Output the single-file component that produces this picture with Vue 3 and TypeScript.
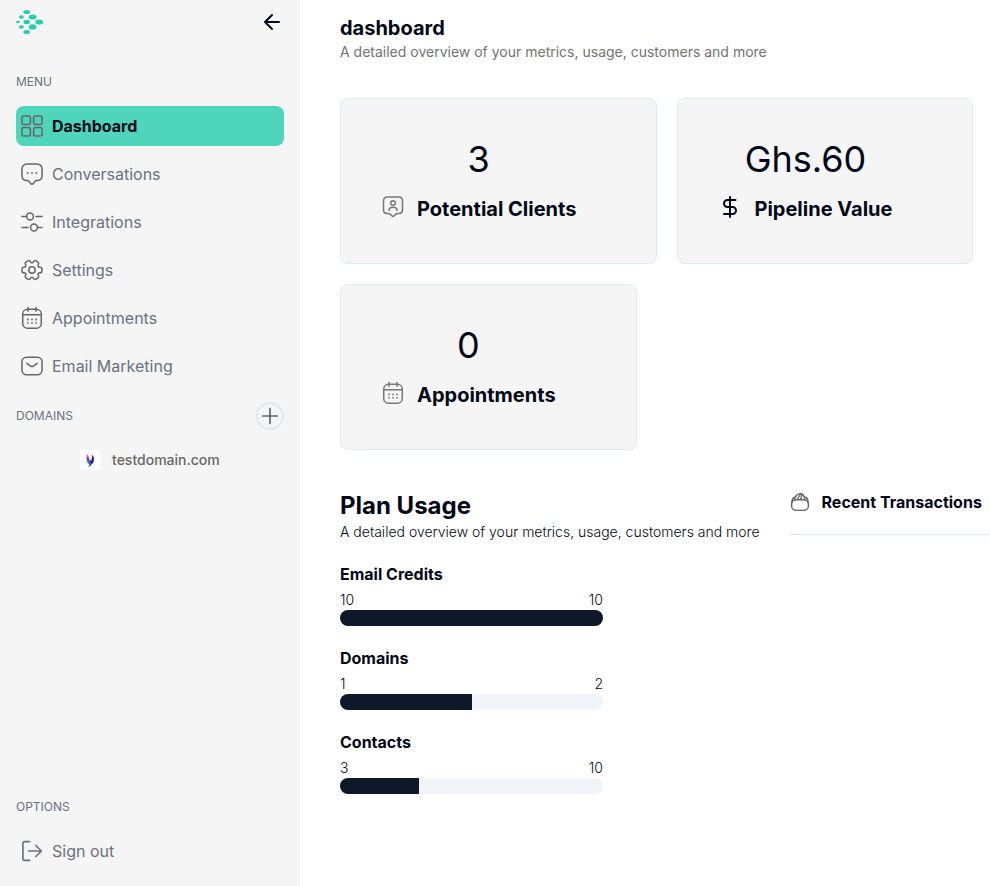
<script setup lang="ts">
interface NavItem {
  label: string
  icon: 'grid' | 'chat' | 'sliders' | 'gear' | 'calendar' | 'mail'
  active?: boolean
}

interface Stat {
  label: string
  value: string
  icon: 'contact' | 'dollar' | 'calendar'
}

interface Usage {
  label: string
  used: number
  limit: number
}

const navItems: NavItem[] = [
  { label: 'Dashboard', icon: 'grid', active: true },
  { label: 'Conversations', icon: 'chat' },
  { label: 'Integrations', icon: 'sliders' },
  { label: 'Settings', icon: 'gear' },
  { label: 'Appointments', icon: 'calendar' },
  { label: 'Email Marketing', icon: 'mail' },
]

const stats: Stat[] = [
  { label: 'Potential Clients', value: '3', icon: 'contact' },
  { label: 'Pipeline Value', value: 'Ghs.60', icon: 'dollar' },
  { label: 'Appointments', value: '0', icon: 'calendar' },
]

const usage: Usage[] = [
  { label: 'Email Credits', used: 10, limit: 10 },
  { label: 'Domains', used: 1, limit: 2 },
  { label: 'Contacts', used: 3, limit: 10 },
]

const percent = (u: Usage): string => `${(u.used / u.limit) * 100}%`
</script>

<template>
  <div class="layout">
    <aside class="sidebar">
      <div class="brand">
        <svg class="logo" viewBox="0 0 28 26" aria-hidden="true">
          <ellipse cx="10.7" cy="3" rx="3.3" ry="2.1" />
          <ellipse cx="5.4" cy="8" rx="2.5" ry="1.8" />
          <ellipse cx="16.6" cy="8" rx="3.9" ry="2.6" />
          <ellipse cx="1.9" cy="13" rx="1.9" ry="1.2" />
          <ellipse cx="10.7" cy="13" rx="3.2" ry="2.2" />
          <ellipse cx="23.2" cy="13" rx="3.9" ry="2.6" />
          <ellipse cx="5.4" cy="18" rx="2.5" ry="1.8" />
          <ellipse cx="16.6" cy="17.9" rx="3.9" ry="2.6" />
          <ellipse cx="10.7" cy="23" rx="3.3" ry="2.1" />
        </svg>
        <button class="collapse" type="button" aria-label="Collapse sidebar">
          <svg class="icon" viewBox="0 0 24 24" aria-hidden="true">
            <path d="M12 19l-7-7 7-7M19 12H5" />
          </svg>
        </button>
      </div>

      <p class="caption menu-caption">MENU</p>
      <nav class="nav">
        <a
          v-for="item in navItems"
          :key="item.label"
          href="#"
          class="nav-link"
          :class="{ active: item.active }"
        >
          <svg class="icon thin" viewBox="0 0 24 24" aria-hidden="true">
            <template v-if="item.icon === 'grid'">
              <rect x="1.900" y="1.900" width="8.500" height="8.500" rx="2" />
              <rect x="13.600" y="1.900" width="8.500" height="8.500" rx="2" />
              <rect x="1.900" y="13.600" width="8.500" height="8.500" rx="2" />
              <rect x="13.600" y="13.600" width="8.500" height="8.500" rx="2" />
            </template>
            <template v-else-if="item.icon === 'chat'">
              <path d="M7.500 2h9c3.900 0 5.600 1.900 5.600 5.600v5.400c0 3.700-1.800 5.600-5.100 5.600-1 0-1.700.3-2.300 1.100l-1.400 1.900c-.8.900-1.800.9-2.600 0l-1.400-1.900c-.6-.8-1.300-1.100-2.300-1.100-3.300 0-5.100-1.900-5.100-5.600V7.600C1.900 3.900 3.600 2 7.500 2z" />
              <path class="dots" d="M7.800 11h.01M12 11h.01M16.200 11h.01" />
            </template>
            <template v-else-if="item.icon === 'sliders'">
              <circle cx="10" cy="6.500" r="3.400" />
              <circle cx="14" cy="17.500" r="3.400" />
              <path d="M2 6.500h4.500M16 6.500h6M2 17.500h6M17.600 17.500H22" />
            </template>
            <template v-else-if="item.icon === 'gear'">
              <circle cx="12" cy="12" r="3.200" />
              <path d="M2 12.900v-1.800c0-1 .9-1.900 1.900-1.900 1.800 0 2.500-1.300 1.600-2.900-.5-.9-.2-2 .7-2.500l1.700-1c.8-.5 1.800-.2 2.300.6l.1.200c.9 1.600 2.400 1.600 3.300 0l.1-.2c.5-.8 1.500-1.100 2.300-.6l1.700 1c.9.5 1.200 1.700.7 2.500-.9 1.600-.2 2.900 1.600 2.900 1 0 1.900.9 1.900 1.900v1.800c0 1-.9 1.900-1.900 1.900-1.800 0-2.500 1.300-1.600 2.900.5.900.2 2-.7 2.500l-1.700 1c-.8.500-1.800.2-2.300-.6l-.1-.2c-.9-1.600-2.400-1.600-3.300 0l-.1.200c-.5.800-1.500 1.100-2.300.6l-1.700-1c-.9-.5-1.200-1.600-.7-2.500.9-1.600.2-2.900-1.600-2.900-1 0-1.900-.8-1.900-1.900z" />
            </template>
            <template v-else-if="item.icon === 'calendar'">
              <path d="M8 1.500v3.700M16 1.500v3.700M3 8.800h18" />
              <rect x="2.700" y="3.300" width="18.600" height="18.900" rx="4.800" />
              <path class="dots" d="M8 13.500h.01M12 13.500h.01M16 13.500h.01M8 16.800h.01M12 16.800h.01M16 16.800h.01" />
            </template>
            <template v-else>
              <rect x="1.900" y="3.200" width="20.200" height="17.600" rx="4.800" />
              <path d="M7 9.300l3.200 2.500c1 .8 2.600.8 3.600 0L17 9.300" />
            </template>
          </svg>
          <span>{{ item.label }}</span>
        </a>
      </nav>

      <div class="domains-head">
        <p class="caption">DOMAINS</p>
        <button class="add" type="button" aria-label="Add domain">
          <svg class="icon medium" viewBox="0 0 24 24" aria-hidden="true">
            <path d="M12 4.700v14.600M4.700 12h14.600" />
          </svg>
        </button>
      </div>
      <a class="domain" href="#">
        <svg class="favicon" viewBox="0 0 20 20" aria-hidden="true">
          <rect width="20" height="20" fill="#fff" />
          <path d="M6.500 3l2 3.200.7 3.300-2-2.200z" fill="#d9589f" />
          <path d="M6 6.500l3 2 1.300 3.500L7 9.800z" fill="#7a2496" />
          <path d="M12.500 4.500L14 8l-.3 3.500-1.700 3-3-2.500 1.500-2 .8 1z" fill="#2a12a8" />
          <path d="M6.300 9.800l4 1.500.8 3.200-3-.9z" fill="#23808c" />
          <path d="M9 13l3 .2-1.200 2.600L8 17l1.300-2z" fill="#1a5fb8" />
        </svg>
        <span>testdomain.com</span>
      </a>

      <div class="options">
        <p class="caption">OPTIONS</p>
        <button class="sign-out" type="button">
          <svg class="icon medium" viewBox="0 0 24 24" aria-hidden="true">
            <path d="M9.500 2.600H4.600a1.700 1.700 0 0 0-1.700 1.700v15.400a1.700 1.700 0 0 0 1.700 1.700h4.900M8.600 12h12.400M15.800 6.500l5.500 5.500-5.500 5.500" />
          </svg>
          <span>Sign out</span>
        </button>
      </div>
    </aside>

    <main class="main">
      <header>
        <h1 class="title">dashboard</h1>
        <p class="subtitle">A detailed overview of your metrics, usage, customers and more</p>
      </header>

      <section class="stats" aria-label="Metrics">
        <article v-for="stat in stats" :key="stat.label" class="card">
          <p class="value">{{ stat.value }}</p>
          <div class="card-label">
            <svg
              class="icon"
              :class="stat.icon === 'dollar' ? 'dollar' : 'thin pale'"
              viewBox="0 0 24 24"
              aria-hidden="true"
            >
              <template v-if="stat.icon === 'contact'">
                <path d="M6.500 2h11c2.700 0 4 1.400 4 3.800v9c0 2.400-1.300 3.800-4 3.800h-.8c-.8 0-1.500.3-2.100.8l-1.500 1.500c-.7.7-1.500.7-2.200 0l-1.500-1.500c-.6-.5-1.300-.8-2.100-.8h-.8c-2.700 0-4-1.400-4-3.800v-9C2.500 3.400 3.800 2 6.500 2z" />
                <circle cx="12" cy="8" r="2.300" />
                <path d="M8 15.400c0-1.900 1.800-3.200 4-3.200s4 1.300 4 3.200" />
              </template>
              <template v-else-if="stat.icon === 'dollar'">
                <path d="M12 2v20M17.500 5H9.500a3.500 3.500 0 0 0 0 7h5a3.500 3.500 0 0 1 0 7H6" />
              </template>
              <template v-else>
                <path d="M8 1.500v3.700M16 1.500v3.700M3 8.800h18" />
                <rect x="2.700" y="3.300" width="18.600" height="18.900" rx="4.800" />
                <path class="dots" d="M8 13.500h.01M12 13.500h.01M16 13.500h.01M8 16.800h.01M12 16.800h.01M16 16.800h.01" />
              </template>
            </svg>
            <h2 class="card-title">{{ stat.label }}</h2>
          </div>
        </article>
      </section>

      <div class="lower">
        <section class="plan">
          <h2 class="plan-title">Plan Usage</h2>
          <p class="plan-text">A detailed overview of your metrics, usage, customers and more</p>
          <div v-for="u in usage" :key="u.label" class="usage">
            <h3 class="section-label">{{ u.label }}</h3>
            <div class="counts">
              <span>{{ u.used }}</span>
              <span>{{ u.limit }}</span>
            </div>
            <div
              class="track"
              role="progressbar"
              :aria-label="u.label"
              :aria-valuenow="u.used"
              aria-valuemin="0"
              :aria-valuemax="u.limit"
            >
              <div class="fill" :style="{ width: percent(u) }"></div>
            </div>
          </div>
        </section>

        <section class="recent">
          <svg class="icon small" viewBox="0 0 24 24" aria-hidden="true">
            <rect x="1.900" y="9.200" width="20.200" height="12.900" rx="5.400" />
            <path d="M2.200 13c0-4.600 1.900-6.800 5-7.300M21.800 13c0-4.600-1.900-6.800-5-7.300M5.500 9.200c.2-3.300 2.300-5.800 5.200-6.900 4-1.100 6.700 1.400 7.200 6.900M8.700 9l3.800-6.300M12.800 9l1.500-5.500" />
          </svg>
          <h2 class="section-label">Recent Transactions</h2>
        </section>
      </div>
    </main>
  </div>
</template>

<style>
body {
  margin: 0;
  background: #fff;
}
</style>

<style scoped>
.layout {
  display: flex;
  min-height: 100vh;
  font-family: Inter, "Liberation Sans", sans-serif;
  font-size: 16px;
  line-height: 24px;
  color: #020817;
}

p,
h1,
h2,
h3 {
  margin: 0;
}

a {
  color: inherit;
  text-decoration: none;
}

button {
  padding: 0;
  border: 0;
  background: none;
  font: inherit;
  color: inherit;
  cursor: pointer;
}

.icon {
  display: block;
  flex: none;
  width: 24px;
  height: 24px;
  fill: none;
  stroke: currentColor;
  stroke-width: 2;
  stroke-linecap: round;
  stroke-linejoin: round;
}

.thin {
  stroke: #666;
  stroke-width: 1.5;
}

.medium {
  stroke-width: 1.7;
}

.pale {
  stroke: #777;
}

.small {
  width: 20px;
  height: 20px;
  stroke: #666;
  stroke-width: 1.7;
}

.dots {
  stroke-width: 1.8;
}

.sidebar {
  display: flex;
  flex: none;
  flex-direction: column;
  box-sizing: border-box;
  width: 300px;
  padding: 8px 16px 15px;
  background: #f5f5f5;
}

.brand {
  display: flex;
  align-items: center;
  justify-content: space-between;
  height: 28px;
}

.logo {
  width: 28px;
  height: 26px;
  fill: #2accb0;
}

.caption {
  font-size: 12px;
  line-height: 16px;
  color: #6b7280;
}

.menu-caption {
  margin-top: 38px;
}

.nav {
  display: flex;
  flex-direction: column;
  gap: 8px;
  margin-top: 16px;
}

.nav-link,
.sign-out {
  display: flex;
  align-items: center;
  gap: 8px;
  height: 40px;
  padding: 0 4px;
  border-radius: 8px;
  color: #6b7280;
}

.nav-link.active {
  background: #4fd5bc;
  font-weight: 700;
  color: #020817;
}

.domains-head {
  display: flex;
  align-items: center;
  justify-content: space-between;
  margin-top: 16px;
}

.add {
  display: flex;
  align-items: center;
  justify-content: center;
  box-sizing: border-box;
  width: 28px;
  height: 28px;
  border: 2px solid #e2e8f0;
  border-radius: 50%;
  color: #5f6577;
}

.domain {
  display: flex;
  align-items: center;
  gap: 12px;
  margin-top: 20px;
  padding-left: 64px;
  font-size: 14px;
  line-height: 20px;
  font-weight: 500;
  color: #666;
}

.favicon {
  width: 20px;
  height: 20px;
}

.options {
  display: flex;
  flex-direction: column;
  gap: 16px;
  margin-top: auto;
}

.main {
  flex: 1;
  min-width: 0;
  padding: 14px 0 40px 40px;
}

.title {
  font-size: 20px;
  line-height: 28px;
  font-weight: 700;
}

.subtitle {
  font-size: 14px;
  line-height: 20px;
  color: #737373;
}

.stats {
  display: flex;
  flex-wrap: wrap;
  gap: 20px;
  margin-top: 36px;
}

.card {
  display: flex;
  flex-direction: column;
  align-items: center;
  gap: 16px;
  padding: 40px 80px 40px 40px;
  border: 1px solid #e2e8f0;
  border-radius: 8px;
  background: #f5f5f5;
}

.value {
  font-size: 36px;
  line-height: 40px;
  font-weight: 400;
}

.card-label {
  display: flex;
  align-items: flex-start;
  gap: 12px;
}

.card-title {
  font-size: 20px;
  line-height: 28px;
  font-weight: 700;
}

.lower {
  display: flex;
  align-items: flex-start;
  gap: 30px;
  margin-top: 40px;
}

.plan-title {
  font-size: 24px;
  line-height: 32px;
  font-weight: 700;
}

.plan-text,
.counts {
  font-size: 14px;
  line-height: 20px;
  font-weight: 300;
}

.usage {
  max-width: 263px;
  margin-top: 20px;
}

.section-label {
  font-size: 16px;
  line-height: 24px;
  font-weight: 700;
  white-space: nowrap;
}

.counts {
  display: flex;
  justify-content: space-between;
  margin-top: 4px;
}

.track {
  overflow: hidden;
  height: 16px;
  border-radius: 8px;
  background: #f1f5f9;
}

.fill {
  height: 100%;
  background: #0f172a;
}

.recent {
  display: flex;
  flex: 1;
  align-items: center;
  gap: 12px;
  padding-bottom: 20px;
  border-bottom: 1px solid #e2e8f0;
}
</style>
